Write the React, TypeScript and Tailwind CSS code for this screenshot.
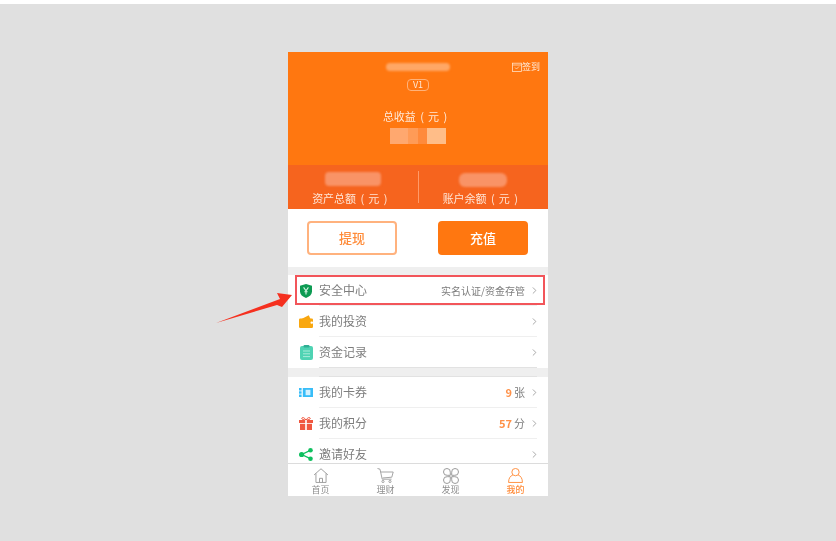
import type { ReactNode } from 'react';
import { ChevronRight } from 'lucide-react';

const font = "font-['Noto_Sans_CJK_SC','Liberation_Sans',sans-serif]";

function ShieldIcon() {
  return (
    <svg width="12" height="14" viewBox="0 0 12 14">
      <path d="M6 0 12 1.800V7.500C12 10.500 9.500 12.700 6 14 2.500 12.700 0 10.500 0 7.500V1.800z" fill="#0d9b53" />
      <path d="M3.600 3.400 6 6.800 8.400 3.400M6 6.800v3.600M4.400 7.800h3.200" stroke="#d8f5e4" strokeWidth="1.100" fill="none" />
    </svg>
  );
}

function WalletIcon() {
  return (
    <svg width="14" height="13" viewBox="0 0 14 13">
      <path d="M2.500 4 9.800.3 11.500 4z" fill="#f7a50f" />
      <rect x="0" y="3.400" width="14" height="9.600" rx="1.200" fill="#f9a70f" />
      <rect x="11.500" y="6.400" width="2.500" height="2.400" rx="1" fill="#fff" />
    </svg>
  );
}

function NotesIcon() {
  return (
    <svg width="13" height="15" viewBox="0 0 13 15">
      <rect x="0" y="1" width="13" height="14" rx="2" fill="#4fd3b3" />
      <rect x="3.500" y="0" width="6" height="2.400" rx="1" fill="#2fae93" />
      <path d="M3 6h7M3 8.800h7M3 11.600h7" stroke="#a8ecd9" strokeWidth="1" />
    </svg>
  );
}

function TicketIcon() {
  return (
    <svg width="14" height="9" viewBox="0 0 14 9">
      <rect x="0" y="0" width="2.600" height="2.500" fill="#38bdf8" />
      <rect x="0" y="3.300" width="2.600" height="2.400" fill="#38bdf8" />
      <rect x="0" y="6.500" width="2.600" height="2.500" fill="#38bdf8" />
      <rect x="3.800" y="0" width="10.200" height="9" fill="#38bdf8" />
      <rect x="6.600" y="1.800" width="4.800" height="5.400" fill="#d4f1fe" />
    </svg>
  );
}

function GiftIcon() {
  return (
    <svg width="14" height="13" viewBox="0 0 14 13">
      <path d="M7 3C5.500.6 3.400-.2 2.800 1 2.300 2.200 4.500 3 7 3c2.500 0 4.700-.8 4.200-2C10.600-.2 8.500.6 7 3z" fill="none" stroke="#f0573f" strokeWidth="1" />
      <rect x="0" y="3" width="14" height="3" fill="#f0573f" />
      <rect x="1" y="6.800" width="12" height="6.200" fill="#f0573f" />
      <rect x="6.200" y="3" width="1.600" height="10" fill="#fff" />
    </svg>
  );
}

function ShareIcon() {
  return (
    <svg width="14" height="13" viewBox="0 0 14 13">
      <path d="M11.300 2.300 2.700 6.500l8.600 4.200" stroke="#0fc05f" strokeWidth="1.300" fill="none" />
      <circle cx="11.500" cy="2.300" r="2.300" fill="#0fc05f" />
      <circle cx="2.600" cy="6.500" r="2.600" fill="#0fc05f" />
      <circle cx="11.500" cy="10.700" r="2.300" fill="#0fc05f" />
    </svg>
  );
}

function CalendarIcon() {
  return (
    <svg width="10" height="10" viewBox="0 0 10 10" fill="none" stroke="#ffe0c6" strokeWidth="0.800">
      <rect x="0.400" y="1.200" width="9.200" height="8.400" />
      <path d="M0.400 3h9.200M3 5.500l1.500 1.500 2.500-2.500" />
    </svg>
  );
}

function HomeIcon() {
  return (
    <svg width="16" height="15" viewBox="0 0 16 16" fill="none" stroke="#9b9b9b" strokeWidth="1">
      <path d="M.6 7.400 8 .8l7.400 6.600M2.600 5.800v9.600h10.800V5.800M6.400 15.400v-4.400h3.200v4.400" />
    </svg>
  );
}

function CartIcon() {
  return (
    <svg width="17" height="15" viewBox="0 0 17 15" fill="none" stroke="#9b9b9b" strokeWidth="0.900">
      <path d="M.5.500 3 1.200l2.200 10h9.300M3.600 4h12.600l-1.400 5.200-9.200.8" />
      <circle cx="6" cy="13.500" r="1.100" />
      <circle cx="13" cy="13.500" r="1.100" />
    </svg>
  );
}

function FindIcon() {
  return (
    <svg width="16" height="16" viewBox="0 0 16 16" fill="none" stroke="#9b9b9b" strokeWidth="1">
      <path d="M7.300 7.300H4.200a3.400 3.400 0 1 1 3.100-3.100zM8.700 7.300V4.200a3.400 3.400 0 1 1 3.100 3.100zM7.300 8.700v3.100a3.400 3.400 0 1 1-3.100-3.100zM8.700 8.700h3.100a3.400 3.400 0 1 1-3.100 3.100z" />
    </svg>
  );
}

function UserIcon() {
  return (
    <svg width="15" height="15" viewBox="0 0 16 16" fill="none" stroke="#ff8c3a" strokeWidth="1">
      <circle cx="8" cy="4.400" r="3.900" />
      <path d="M5.200 7.400C2.600 8.400.6 10.800.6 15.400h14.800c0-4.600-2-7-4.600-8" />
    </svg>
  );
}

function Row({ icon, label, right, line = 'border-[#efefef]' }: { icon: ReactNode; label: string; right?: ReactNode; line?: string }) {
  return (
    <div className="h-[31px] flex items-center pl-[10px] pr-[11px] shrink-0">
      <div className="w-[16px] mr-[5px] flex justify-center shrink-0">{icon}</div>
      <div className={`flex-1 h-full flex items-center justify-between border-b ${line}`}>
        <span className="text-[12px] text-[#7d7d7d]">{label}</span>
        <div className="flex items-center gap-[4px]">
          {right}
          <ChevronRight size={11} strokeWidth={1.6} className="text-[#8a8a8a] shrink-0 -mr-[3px]" />
        </div>
      </div>
    </div>
  );
}

function Count({ value, unit }: { value: string; unit: string }) {
  return (
    <span className="text-[11px] text-[#7d7d7d] flex items-baseline gap-[2px]">
      <b className="text-[#ff9148] text-[11px]">{value}</b>
      {unit}
    </span>
  );
}

function Blur({ className }: { className: string }) {
  return <div className={`blur-[1px] ${className}`} />;
}

function Tab({ icon, label, active }: { icon: ReactNode; label: string; active?: boolean }) {
  return (
    <div className="flex-1 flex flex-col items-center pt-[4px]">
      <div className="h-[15px] flex items-center">{icon}</div>
      <span className={`text-[9px] leading-[12px] mt-[1px] ${active ? 'text-[#ff8c3a] font-medium' : 'text-[#8f8f8f]'}`}>{label}</span>
    </div>
  );
}

export default function App() {
  return (
    <div className={`${font} w-[836px] h-[541px] bg-white pt-[4px] overflow-hidden`}>
      <div className="h-[537px] bg-[#e0e0e0] flex justify-center pt-[48px] relative">
        <div className="w-[260px] h-[444px] bg-white flex flex-col overflow-hidden blur-[0.4px]">
          {/* orange header */}
          <div className="h-[113px] shrink-0 bg-[#ff7710] flex flex-col items-center text-white relative">
            <Blur className="w-[64px] h-[8px] mt-[11px] bg-[#ffa765] rounded-full" />
            <div className="mt-[8px] w-[22px] h-[12px] border border-[#ffb27a] rounded-[4px] text-[9px] leading-[10px] text-center text-[#ffe6d3]">V1</div>
            <div className="mt-[17px] mr-[6px] text-[11px] leading-[16px] text-[#ffe9d8] [word-spacing:1.8px]">总收益 ( 元 )</div>
            <div className="mt-[4px] w-[56px] h-[16px] flex blur-[0.5px]">
              <div className="w-[18px] bg-[#ffa86f]" />
              <div className="w-[10px] bg-[#ff9b57]" />
              <div className="w-[9px] bg-[#ff8a3c]" />
              <div className="w-[19px] bg-[#ffbd88]" />
            </div>
            <div className="absolute right-[8px] top-[9px] flex items-center text-[9px] leading-[12px] text-[#ffe9d8]">
              <CalendarIcon />
              <span>签到</span>
            </div>
          </div>
          {/* balances */}
          <div className="h-[44px] shrink-0 bg-[#f6641e] flex items-start pt-[7px] text-[#ffe5d5]">
            <div className="flex-1 flex flex-col items-center">
              <Blur className="w-[56px] h-[14px] bg-[#f99366] rounded-sm" />
              <div className="text-[11px] leading-[16px] mt-[4px] mr-[6px] [word-spacing:1.8px]">资产总额 ( 元 )</div>
            </div>
            <div className="w-px h-[32px] -mt-[1px] bg-[#ff9a68]" />
            <div className="flex-1 flex flex-col items-center">
              <Blur className="w-[48px] h-[14px] mt-[1px] bg-[#f99366] rounded-md" />
              <div className="text-[11px] leading-[16px] mt-[3px] mr-[6px] [word-spacing:1.8px]">账户余额 ( 元 )</div>
            </div>
          </div>
          {/* buttons */}
          <div className="h-[58px] flex items-center justify-between pl-[19px] pr-[20px] shrink-0">
            <div className="w-[90px] h-[34px] border-2 border-[#ffb27e] rounded-[4px] flex items-center justify-center text-[13px] text-[#ff8c3a] font-medium">提现</div>
            <div className="w-[90px] h-[34px] bg-[#ff7710] rounded-[4px] flex items-center justify-center text-[13px] text-white font-medium">充值</div>
          </div>
          <div className="h-[8px] bg-[#efefef] shrink-0" />
          {/* lists, the tab bar cuts the last row */}
          <div className="flex-1 min-h-0 overflow-hidden">
            <Row
              icon={<ShieldIcon />}
              label="安全中心"
              right={<span className="text-[10px] text-[#7d7d7d]">实名认证/资金存管</span>}
            />
            <Row icon={<WalletIcon />} label="我的投资" />
            <Row icon={<NotesIcon />} label="资金记录" line="border-[#e2e2e2]" />
            <div className="h-[9px] bg-[#efefef] flex items-end pl-[31px] pr-[11px]">
              <div className="flex-1 h-px bg-[#e2e2e2]" />
            </div>
            <Row icon={<TicketIcon />} label="我的卡券" right={<Count value="9" unit="张" />} />
            <Row icon={<GiftIcon />} label="我的积分" right={<Count value="57" unit="分" />} />
            <Row icon={<ShareIcon />} label="邀请好友" />
          </div>
          {/* tab bar */}
          <div className="h-[33px] border-t border-[#dcdcdc] flex bg-white shrink-0">
            <Tab icon={<HomeIcon />} label="首页" />
            <Tab icon={<CartIcon />} label="理财" />
            <Tab icon={<FindIcon />} label="发现" />
            <Tab icon={<UserIcon />} label="我的" active />
          </div>
        </div>
        {/* red highlight box */}
        <div className="absolute left-[295px] top-[271px] w-[250px] h-[30px] border-2 border-[#f2555a]" />
        {/* arrow */}
        <svg className="absolute left-[214px] top-[287px]" width="80" height="36" viewBox="0 0 80 36">
          <path d="M2 32 66 8 63 2 78 4 68 16 63 14z" fill="#f5301f" />
        </svg>
      </div>
    </div>
  );
}
